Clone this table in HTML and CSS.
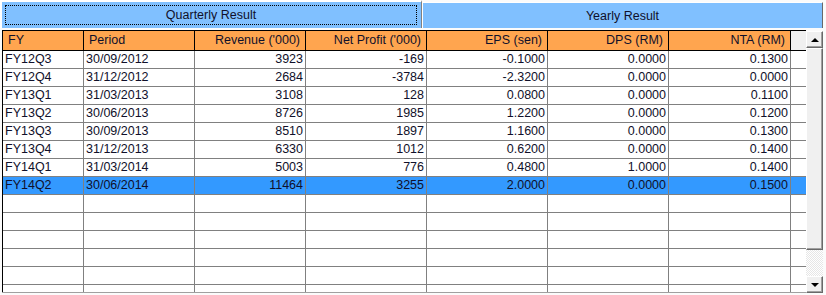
FILE: index.html
```html
<!DOCTYPE html>
<html lang="en">
<head>
    <meta charset="UTF-8">
    <title>Financial Results</title>
    <link rel="stylesheet" href="styles.css">
</head>
<body>
    <div class="tabs">
        <div class="tab active"><span class="focus">Quarterly Result</span></div>
        <div class="tab">Yearly Result</div>
    </div>
    <div class="grid">
        <div class="table-wrap">
            <table class="results">
                <thead>
                    <tr>
                        <th class="c-fy left">FY</th>
                        <th class="c-period left">Period</th>
                        <th class="c-rev">Revenue ('000)</th>
                        <th class="c-np">Net Profit ('000)</th>
                        <th class="c-eps">EPS (sen)</th>
                        <th class="c-dps">DPS (RM)</th>
                        <th class="c-nta">NTA (RM)</th>
                        <th class="c-fill"></th>
                    </tr>
                </thead>
                <tbody>
                    <tr><td class="left">FY12Q3</td><td class="left">30/09/2012</td><td>3923</td><td>-169</td><td>-0.1000</td><td>0.0000</td><td>0.1300</td><td class="fill"></td></tr>
                    <tr><td class="left">FY12Q4</td><td class="left">31/12/2012</td><td>2684</td><td>-3784</td><td>-2.3200</td><td>0.0000</td><td>0.0000</td><td class="fill"></td></tr>
                    <tr><td class="left">FY13Q1</td><td class="left">31/03/2013</td><td>3108</td><td>128</td><td>0.0800</td><td>0.0000</td><td>0.1100</td><td class="fill"></td></tr>
                    <tr><td class="left">FY13Q2</td><td class="left">30/06/2013</td><td>8726</td><td>1985</td><td>1.2200</td><td>0.0000</td><td>0.1200</td><td class="fill"></td></tr>
                    <tr><td class="left">FY13Q3</td><td class="left">30/09/2013</td><td>8510</td><td>1897</td><td>1.1600</td><td>0.0000</td><td>0.1300</td><td class="fill"></td></tr>
                    <tr><td class="left">FY13Q4</td><td class="left">31/12/2013</td><td>6330</td><td>1012</td><td>0.6200</td><td>0.0000</td><td>0.1400</td><td class="fill"></td></tr>
                    <tr><td class="left">FY14Q1</td><td class="left">31/03/2014</td><td>5003</td><td>776</td><td>0.4800</td><td>1.0000</td><td>0.1400</td><td class="fill"></td></tr>
                    <tr class="selected"><td class="left">FY14Q2</td><td class="left">30/06/2014</td><td>11464</td><td>3255</td><td>2.0000</td><td>0.0000</td><td>0.1500</td><td class="fill"></td></tr>
                    <tr><td></td><td></td><td></td><td></td><td></td><td></td><td></td><td class="fill"></td></tr>
                    <tr><td></td><td></td><td></td><td></td><td></td><td></td><td></td><td class="fill"></td></tr>
                    <tr><td></td><td></td><td></td><td></td><td></td><td></td><td></td><td class="fill"></td></tr>
                    <tr><td></td><td></td><td></td><td></td><td></td><td></td><td></td><td class="fill"></td></tr>
                    <tr><td></td><td></td><td></td><td></td><td></td><td></td><td></td><td class="fill"></td></tr>
                    <tr><td></td><td></td><td></td><td></td><td></td><td></td><td></td><td class="fill"></td></tr>
                </tbody>
            </table>
        </div>
        <div class="scrollbar">
            <div class="sb-btn"><span class="arrow up"></span></div>
            <div class="sb-thumb"></div>
            <div class="sb-track"></div>
            <div class="sb-btn"><span class="arrow down"></span></div>
        </div>
    </div>
</body>
</html>
```

FILE: styles.css
```css
body {
    margin: 0;
    width: 826px;
    height: 295px;
    overflow: hidden;
    background: #fbfbfb;
    font-family: 'Liberation Sans', Arial, sans-serif;
    font-size: 12.5px;
    color: #10102a;
}

/* tab strip */
.tabs {
    display: flex;
    height: 28px;
}

.tab {
    box-sizing: border-box;
    display: flex;
    justify-content: center;
    align-items: center;
    background: #80c0ff;
}

.tab.active {
    width: 422px;
    height: 28px;
    border-top: 2px solid #ffffff;
    border-left: 2px solid #ffffff;
    border-right: 1px solid #808080;
    align-items: flex-start;
    justify-content: flex-start;
}

.tab:not(.active) {
    width: 401px;
    height: 26px;
    margin-top: 2px;
    padding-top: 1px;
    border-top: 1px solid #ffffff;
    border-left: 1px solid #ffffff;
    border-right: 1px solid #696969;
}

.focus {
    box-sizing: border-box;
    display: flex;
    justify-content: center;
    align-items: center;
    width: 412px;
    height: 20px;
    margin: 3px 0 0 3px;
    border: 1px dotted #000000;
}

/* grid */
.grid {
    display: flex;
    margin-top: 2px;
}

.table-wrap {
    margin-left: 2px;
    width: 804px;
    height: 262px;
    overflow: hidden;
    border-bottom: 1px solid #a0a0a0;
}

.results {
    table-layout: fixed;
    width: 804px;
    border-collapse: separate;
    border-spacing: 0;
    border-top: 1px solid #000000;
    border-left: 1px solid #000000;
}

.results th,
.results td {
    box-sizing: border-box;
    padding: 0 2px 0 0;
    text-align: right;
    white-space: nowrap;
    overflow: hidden;
    font-weight: normal;
}

.results th {
    height: 20px;
    line-height: 19px;
    padding-right: 5px;
    background: #ffa54f;
    border-right: 1px solid #000000;
    border-bottom: 1px solid #000000;
}

.results td {
    height: 18px;
    line-height: 17px;
    background: #ffffff;
    border-right: 1px solid #808080;
    border-bottom: 1px solid #808080;
}

.results th.left {
    text-align: left;
    padding: 0 0 0 5px;
}

.results td.left {
    text-align: left;
    padding: 0 0 0 2px;
}

.c-fy { width: 81px; }
.c-period { width: 111px; }
.c-rev { width: 111px; }
.c-np { width: 121px; }
.c-eps { width: 121px; }
.c-dps { width: 121px; }
.c-nta { width: 122px; }

.results th.c-fill {
    width: 15px;
    background: #f0f0f0;
    border-right: none;
}

.results td.fill {
    border-right: none;
}

.results tr.selected td {
    background: #3399ff;
}

/* scrollbar */
.scrollbar {
    display: flex;
    flex-direction: column;
    width: 17px;
    height: 262px;
    margin-top: 1px;
}

.sb-btn,
.sb-thumb {
    box-sizing: border-box;
    display: flex;
    justify-content: center;
    align-items: center;
    background: #f0f0f0;
    border-top: 1px solid #ffffff;
    border-left: 1px solid #ffffff;
    border-right: 1px solid #696969;
    border-bottom: 1px solid #696969;
    box-shadow: inset -1px -1px 0 #a0a0a0;
}

.sb-btn {
    height: 17px;
}

.sb-thumb {
    height: 202px;
}

.sb-track {
    height: 26px;
    background: repeating-conic-gradient(#ffffff 0 25%, #e6e6e6 0 50%) 0 0 / 2px 2px;
}

.arrow {
    width: 0;
    height: 0;
    border-left: 4px solid transparent;
    border-right: 4px solid transparent;
}

.arrow.up {
    border-bottom: 4px solid #000000;
}

.arrow.down {
    border-top: 4px solid #000000;
}
```
